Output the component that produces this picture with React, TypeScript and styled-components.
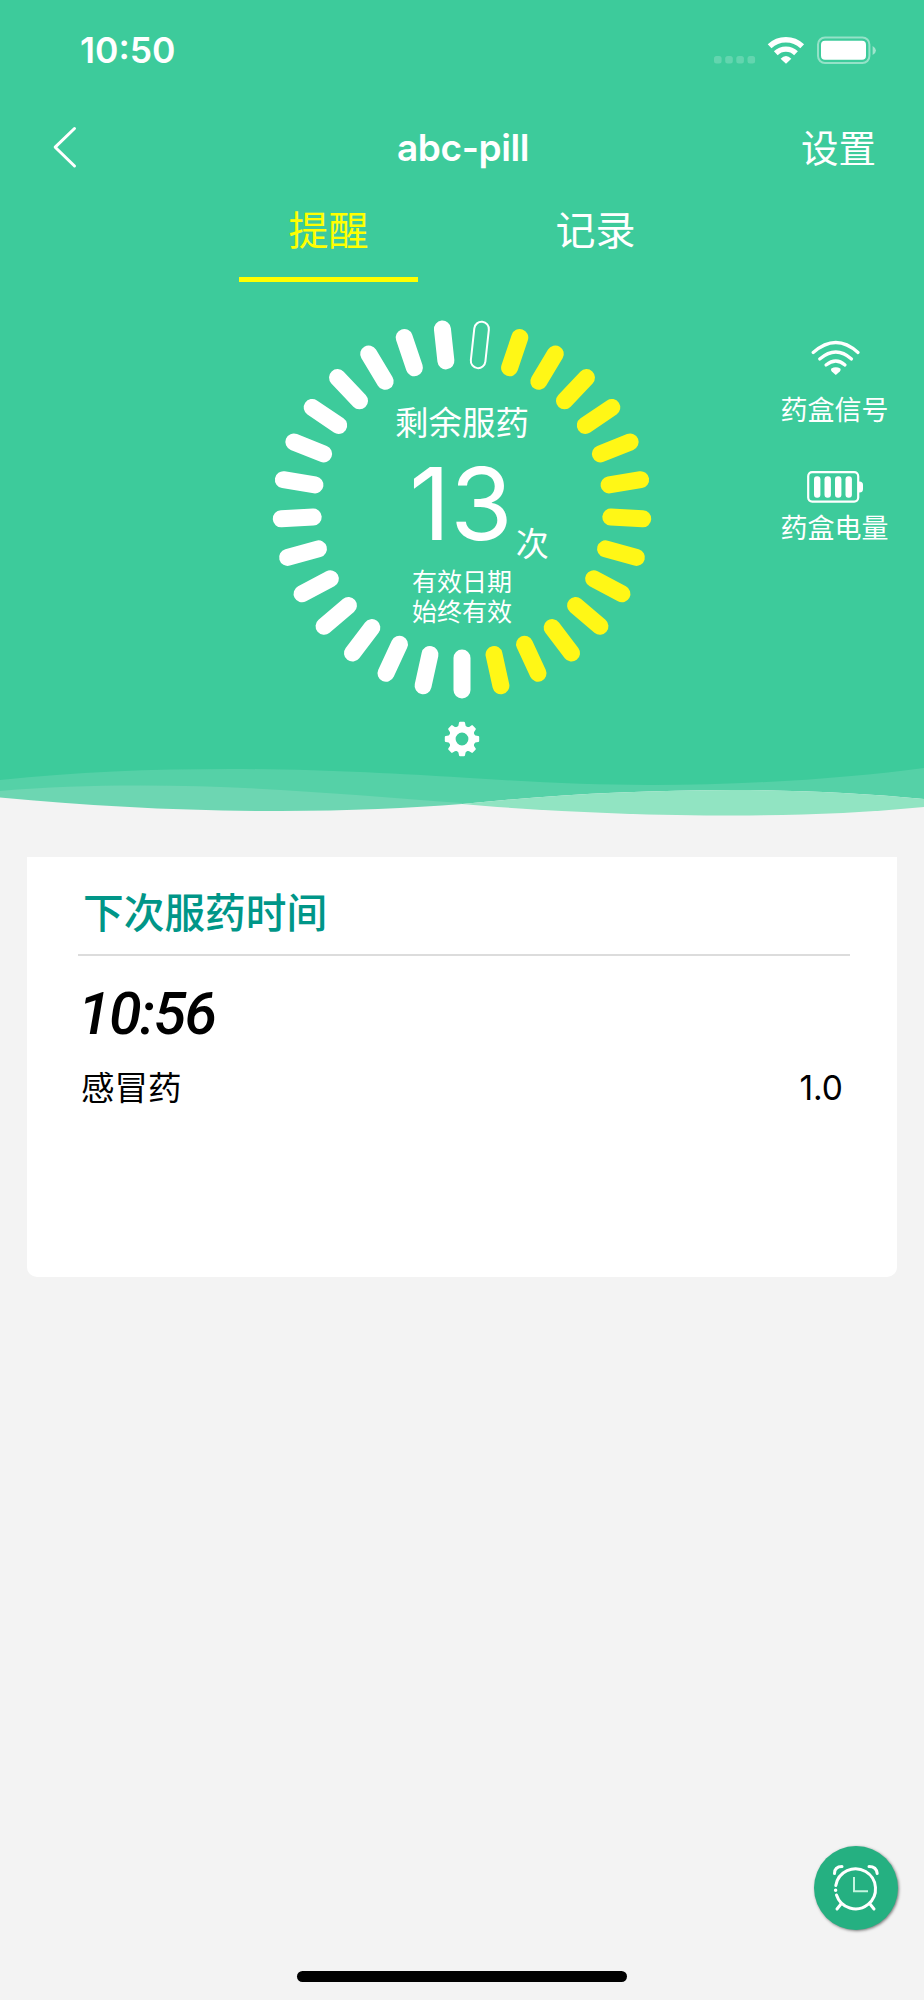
import React from "react";
import styled, { createGlobalStyle } from "styled-components";

const GlobalStyle = createGlobalStyle`
  * { box-sizing: border-box; }
  body { margin: 0; background: #f3f3f3; font-family: Inter, "Noto Sans CJK SC", sans-serif; }
`;

const Screen = styled.div`
  width: 924px;
  height: 2000px;
  display: flex;
  flex-direction: column;
  background: #f3f3f3;
  overflow: hidden;
`;

const Hero = styled.header`
  display: flex;
  flex-direction: column;
  height: 760px;
  background: #3dcb9b;
  color: #fff;
  flex: none;
`;

const StatusBar = styled.div`
  height: 100px;
  padding: 0 48px 0 80px;
  display: flex;
  align-items: center;
  justify-content: space-between;
`;

const Clock = styled.span`
  font-size: 35.5px;
  font-weight: 600;
  line-height: 40px;
  padding-top: 1px;
`;

const StatusIcons = styled.div`
  display: flex;
  align-items: center;
`;

const NavBar = styled.nav`
  height: 95px;
  padding: 0 48px 0 50px;
  display: grid;
  grid-template-columns: 1fr auto 1fr;
  align-items: center;
`;

const NavTitle = styled.h1`
  margin: 0;
  font-size: 37px;
  font-weight: 600;
  line-height: 44px;
  letter-spacing: -0.4px;
`;

const NavAction = styled.span`
  justify-self: end;
  font-size: 37.5px;
  line-height: 44px;
  padding-top: 3px;
`;

const Tabs = styled.div`
  display: flex;
  justify-content: center;
  gap: 88px;
  height: 87px;
`;

const Tab = styled.div<{ $active?: boolean }>`
  width: 179px;
  text-align: center;
  font-size: 40px;
  line-height: 71px;
  color: ${(p) => (p.$active ? "#ffff00" : "#fff")};
  border-bottom: 5px solid ${(p) => (p.$active ? "#ffff00" : "transparent")};
`;

const Overview = styled.section`
  display: grid;
  grid-template-columns: 1fr 380px 1fr;
  padding-top: 37px;
`;

const Dial = styled.div`
  grid-column: 2;
  display: grid;
  height: 380px;
  > * { grid-area: 1 / 1; }
`;

const DialText = styled.div`
  display: flex;
  flex-direction: column;
  align-items: center;
  padding-top: 84px;
  font-size: 33.5px;
  line-height: 40px;
`;

const Count = styled.div`
  display: flex;
  align-items: flex-end;
  height: 117px;
  margin-left: 34px;
`;

const CountValue = styled.span`
  font-size: 101px;
  line-height: 114px;
`;

const CountUnit = styled.span`
  font-size: 33px;
  line-height: 40px;
  margin: 0 0 -4px 3px;
`;

const Validity = styled.div`
  font-size: 25px;
  line-height: 30px;
  text-align: center;
  margin-top: 7px;
`;

const Side = styled.aside`
  display: flex;
  flex-direction: column;
  align-items: center;
  padding: 20px 0 0 93px;
`;

const DeviceStat = styled.div<{ $gap: number }>`
  display: flex;
  flex-direction: column;
  align-items: center;
  gap: ${(p) => p.$gap}px;
  font-size: 27px;
  line-height: 36px;
  white-space: nowrap;
  & + & { margin-top: 42px; }
`;

const GearRow = styled.div`
  display: flex;
  justify-content: center;
  margin-top: 22px;
`;

const Waves = styled.svg`
  display: block;
  flex: none;
`;

const Card = styled.main`
  height: 420px;
  margin: 37px 27px 0;
  padding: 26px 47px 0 51px;
  background: #fff;
  border-radius: 0 0 10px 10px;
`;

const CardTitle = styled.h2`
  margin: 0;
  padding-left: 5px;
  height: 73px;
  font-size: 40.7px;
  font-weight: 500;
  line-height: 61px;
  color: #009688;
  border-bottom: 2px solid #dcdcdc;
`;

const DoseTime = styled.div`
  margin: 23px 0 0 0;
  font-family: Roboto, sans-serif;
  font-style: italic;
  font-weight: 500;
  font-size: 59px;
  line-height: 70px;
  letter-spacing: -1.6px;
  color: #000;
`;

const DoseRow = styled.div`
  display: flex;
  justify-content: space-between;
  padding: 0 7px 0 3px;
  margin-top: 16px;
  font-size: 33.5px;
  line-height: 46px;
  color: #000;
`;

const Footer = styled.footer`
  margin-top: auto;
  display: flex;
  flex-direction: column;
`;

const AlarmButton = styled.button`
  align-self: flex-end;
  width: 84px;
  height: 84px;
  margin: 0 26px 41px 0;
  padding: 0;
  border: 0;
  border-radius: 50%;
  background: #25b081;
  box-shadow: 1px 1px 3px rgba(0, 0, 0, 0.5);
`;

const HomeIndicator = styled.div`
  align-self: center;
  width: 330px;
  height: 11px;
  margin-bottom: 18px;
  border-radius: 6px;
  background: #000;
`;

const PILLS = 29;

function PillRing() {
  return (
    <svg width="380" height="380" viewBox="-190 -190 380 380">
      {Array.from({ length: PILLS }, (_, i) => {
        const angle = ((i + 0.5) * 360) / PILLS;
        const outline = i === 0;
        const inset = outline ? 1.2 : 0;
        return (
          <rect
            key={i}
            x={-8.5 + inset}
            y={-189.5 + inset}
            width={17 - inset * 2}
            height={49 - inset * 2}
            rx={8.5 - inset}
            fill={outline ? "none" : i <= 13 ? "#fff716" : "#fff"}
            stroke={outline ? "#fff" : "none"}
            strokeWidth="2"
            transform={`rotate(${angle})`}
          />
        );
      })}
    </svg>
  );
}

function Gear() {
  return (
    <svg width="36" height="36" viewBox="-18 -18 36 36">
      <circle r="9.8" fill="none" stroke="#fff" strokeWidth="6.8" />
      {Array.from({ length: 8 }, (_, i) => (
        <path
          key={i}
          d="M-5-11.5Q-3.2-13-3-16.2Q-2.9-17.2-1.9-17.2H1.9Q2.9-17.2 3-16.2Q3.2-13 5-11.5Z"
          fill="#fff"
          transform={`rotate(${i * 45})`}
        />
      ))}
    </svg>
  );
}

export default function App() {
  return (
    <Screen>
      <GlobalStyle />
      <Hero>
        <StatusBar>
          <Clock>10:50</Clock>
          <StatusIcons>
            <svg width="164" height="30" viewBox="712 35 164 30">
              {[714, 725.2, 736.3, 747.5].map((x) => (
                <rect key={x} x={x} y="56" width="7.6" height="7.4" rx="2.5" fill="#fff" opacity=".2" />
              ))}
              <g fill="none" stroke="#fff" strokeWidth="5.4">
                <path d="M769.6 46.3A23.5 23.5 0 0 1 802.2 46.3" />
                <path d="M775.8 53.2A14.5 14.5 0 0 1 796 53.2" />
              </g>
              <path d="M780.6 58.7Q786 53.5 791.3 58.7L786 63.7Z" fill="#fff" />
              <rect x="818" y="37.5" width="51.4" height="25.6" rx="7" fill="none" stroke="#fff" strokeOpacity=".45" strokeWidth="2" />
              <rect x="821" y="40.8" width="45" height="19" rx="4" fill="#fff" />
              <path d="M872.6 46Q876 48 876 50.5Q876 53 872.6 55Z" fill="#fff" opacity=".5" />
            </svg>
          </StatusIcons>
        </StatusBar>
        <NavBar>
          <svg width="28" height="46" viewBox="0 0 28 46">
            <path d="M24.5 3.5L5.2 22.2L24.5 41" fill="none" stroke="#fff" strokeWidth="3" strokeLinecap="round" strokeLinejoin="round" />
          </svg>
          <NavTitle>abc-pill</NavTitle>
          <NavAction>设置</NavAction>
        </NavBar>
        <Tabs>
          <Tab $active>提醒</Tab>
          <Tab>记录</Tab>
        </Tabs>
        <Overview>
          <Dial>
            <PillRing />
            <DialText>
              <span>剩余服药</span>
              <Count>
                <CountValue>13</CountValue>
                <CountUnit>次</CountUnit>
              </Count>
              <Validity>
                有效日期
                <br />
                始终有效
              </Validity>
            </DialText>
          </Dial>
          <Side>
            <DeviceStat $gap={16}>
              <svg width="50" height="38" viewBox="0 0 50 38">
                <g fill="none" stroke="#fff" strokeWidth="3.2" strokeLinecap="round">
                  <path d="M3.2 13.5Q26-6.5 48 13.5" />
                  <path d="M9.7 20Q26 6 41.5 20" />
                  <path d="M16 26Q26 18 35 26" />
                </g>
                <path d="M21.3 29.5Q25.8 27 30.3 29.5Q31.3 31 29.8 32.5L25.8 36L21.8 32.5Q20.3 31 21.3 29.5Z" fill="#fff" />
              </svg>
              药盒信号
            </DeviceStat>
            <DeviceStat $gap={8}>
              <svg width="57" height="32" viewBox="0 0 57 32">
                <rect x="2.2" y="1.2" width="50" height="29.4" rx="4" fill="none" stroke="#fff" strokeWidth="2.2" />
                <path d="M52 10.5H53.5Q57 10.5 57 14V18Q57 21.5 53.5 21.5H52Z" fill="#fff" />
                {[8, 18.5, 29, 39.5].map((x) => (
                  <rect key={x} x={x} y="5.2" width="6.4" height="21.5" rx="3" fill="#fff" />
                ))}
              </svg>
              药盒电量
            </DeviceStat>
          </Side>
        </Overview>
        <GearRow>
          <Gear />
        </GearRow>
      </Hero>
      <Waves width="924" height="60" viewBox="0 0 924 60">
        <path d="M0 0H924V39C860 33 800 30 734 30C640 30 550 35 462 44L280 36L0 34Z" fill="#55d1a7" />
        <path d="M0 31C45 27 90 25.5 140 25.5C260 25.5 360 36 462 43V44C410 48 350 51 280 51C180 51 90 46 0 37.5Z" fill="#6dd6b2" />
        <path d="M462 44C550 35 640 30 734 30C800 30 860 33 924 39V47C860 53 800 55.5 735 55.5C640 55.5 540 51 462 44Z" fill="#91e4c2" />
        <path d="M0 0H924V8C850 18 750 25 650 25C590 25 530 22 462 17.5C400 14 320 9 230 9C150 9 75 12 0 20Z" fill="#3dcb9b" />
      </Waves>
      <Card>
        <CardTitle>下次服药时间</CardTitle>
        <DoseTime>10:56</DoseTime>
        <DoseRow>
          <span>感冒药</span>
          <span>1.0</span>
        </DoseRow>
      </Card>
      <Footer>
        <AlarmButton aria-label="闹钟">
          <svg width="84" height="84" viewBox="0 0 84 84" fill="none" stroke="#fff" strokeLinecap="round">
            <path d="M21.8 39.5A20 20 0 1 1 22.5 49" strokeWidth="3" />
            <circle cx="21.6" cy="44.3" r="1" strokeWidth="1.5" fill="#fff" />
            <path d="M40 31V45.3H54" strokeWidth="2" stroke="#c4f5e0" strokeLinecap="butt" />
            <path d="M20.5 27.5Q20.5 20.5 28 20.5M55 20.5Q62.5 20.5 63.2 27.5" strokeWidth="3" />
            <path d="M27 58L23 63M56 58L60 63" strokeWidth="3" />
          </svg>
        </AlarmButton>
        <HomeIndicator />
      </Footer>
    </Screen>
  );
}
